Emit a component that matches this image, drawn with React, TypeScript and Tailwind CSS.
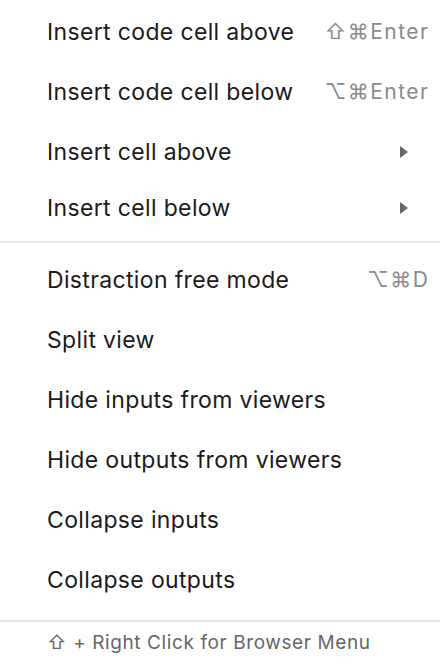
import React from "react";

type Item = { label: string; shortcut?: string; submenu?: boolean };

const group1: Item[] = [
  { label: "Insert code cell above", shortcut: "⇧⌘Enter" },
  { label: "Insert code cell below", shortcut: "⌥⌘Enter" },
  { label: "Insert cell above", submenu: true },
  { label: "Insert cell below", submenu: true },
];

const group2: Item[] = [
  { label: "Distraction free mode", shortcut: "⌥⌘D" },
  { label: "Split view" },
  { label: "Hide inputs from viewers" },
  { label: "Hide outputs from viewers" },
  { label: "Collapse inputs" },
  { label: "Collapse outputs" },
];

function Row({ item, h }: { item: Item; h: string }) {
  return (
    <div className={`flex items-center justify-between pl-[47px] pr-[12px] ${h}`}>
      <span className="text-[23px] text-[#1a1a1a] tracking-[0.35px]">{item.label}</span>
      {item.shortcut && (
        <span className="text-[21px] text-[#8a8a8a] tracking-[1.5px] -mr-[1.5px]">{item.shortcut}</span>
      )}
      {item.submenu && (
        <svg width="10" height="16" viewBox="0 0 10 16" className="mr-[20px]">
          <path d="M2 2 L10 8 L2 14 Z" fill="#666" />
        </svg>
      )}
    </div>
  );
}

export default function App() {
  return (
    <div
      className="w-[440px] h-[666px] bg-white overflow-hidden pt-[2px]"
      style={{ fontFamily: "Inter, 'DejaVu Sans', sans-serif" }}
    >
      <Row item={group1[0]} h="h-[60px]" />
      <Row item={group1[1]} h="h-[60px]" />
      <Row item={group1[2]} h="h-[60px]" />
      <Row item={group1[3]} h="h-[52px]" />
      <div className="my-[7px] h-[2px] bg-[#e6e6e6]" />
      {group2.map((it) => (
        <Row key={it.label} item={it} h="h-[60px]" />
      ))}
      <div className="mt-[10px] h-[2px] bg-[#e6e6e6]" />
      <div className="h-[42px] flex items-center pl-[47px] text-[19px] text-[#666] tracking-[0.6px]">
        <span>⇧ + Right Click for Browser Menu</span>
      </div>
    </div>
  );
}
